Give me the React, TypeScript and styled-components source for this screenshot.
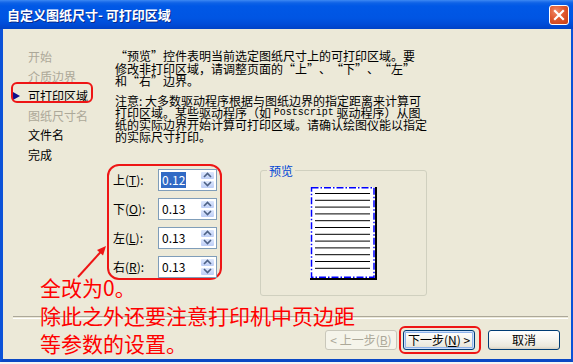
import React from "react";
import styled, { createGlobalStyle, css } from "styled-components";

const UI_FONT = `"Noto Sans CJK SC", "Liberation Sans", sans-serif`;

const GlobalStyle = createGlobalStyle`
  html, body { margin: 0; padding: 0; background: #ffffff; }
  body { width: 573px; height: 364px; overflow: hidden; font-family: ${UI_FONT}; }
`;

const Window = styled.div`
  position: relative;
  width: 573px;
  height: 364px;
  display: flex;
  flex-direction: column;
  font-family: ${UI_FONT};
  font-size: 12px;
  color: #000;
`;

const TitleBar = styled.div`
  flex: none;
  height: 29px;
  box-sizing: border-box;
  display: flex;
  align-items: center;
  justify-content: space-between;
  padding: 0 4px 0 7px;
  background: linear-gradient(
    to bottom,
    #3f8cf3 0px,
    #2a78ee 1px,
    #0d62e6 3px,
    #0058e6 6px,
    #0055e3 18px,
    #004cd8 24px,
    #0042c6 29px
  );
`;

const Title = styled.span`
  color: #fff;
  font-weight: 700;
  font-size: 13px;
  line-height: 16px;
  text-shadow: 1px 1px 0 #0a2a8a;
  white-space: nowrap;
`;

const CloseButton = styled.div`
  width: 20px;
  height: 20px;
  box-sizing: border-box;
  border: 1px solid #fff;
  border-radius: 3px;
  background: radial-gradient(circle at 35% 30%, #f08a6a 0%, #e0582f 45%, #c63d14 100%);
  display: flex;
  align-items: center;
  justify-content: center;
`;

const Frame = styled.div`
  flex: 1;
  display: flex;
  flex-direction: column;
  border-left: 3px solid #0b52d8;
  border-right: 2px solid #0b52d8;
  border-bottom: 3px solid #0a48c4;
`;

const Client = styled.div`
  flex: 1;
  display: flex;
  flex-direction: column;
  background: #ece9d8;
`;

const BottomStrip = styled.div`
  flex: none;
  height: 2px;
  background: #f4f4f4;
`;

const Top = styled.div`
  flex: 1;
  display: flex;
  min-height: 0;
`;

const Nav = styled.div`
  flex: none;
  width: 112px;
  box-sizing: border-box;
  padding: 18px 0 0 9px;
  display: flex;
  flex-direction: column;
  align-items: flex-start;
`;

const NavItem = styled.div<{ $disabled?: boolean; $marked?: boolean }>`
  position: relative;
  display: inline-flex;
  align-items: center;
  height: 19.6px;
  line-height: 19.6px;
  color: ${(p) => (p.$disabled ? "#aca899" : "#000")};
  white-space: nowrap;
  ${(p) =>
    p.$marked &&
    css`
      &::after {
        content: "";
        position: absolute;
        top: -4px;
        bottom: 3px;
        left: -1px;
        right: -5px;
        border: 2px solid #ee1515;
        border-radius: 6px;
      }
    `}
`;

const MarkerSlot = styled.span`
  width: 16px;
  flex: none;
  display: flex;
  align-items: center;
`;

const Marker = styled.span`
  width: 0;
  height: 0;
  margin-left: 1px;
  border-left: 7px solid #10108a;
  border-top: 4px solid transparent;
  border-bottom: 4px solid transparent;
`;

const Main = styled.div`
  flex: 1;
  padding-top: 21px;
  display: flex;
  flex-direction: column;
`;

const Para = styled.div`
  margin: 0;
  white-space: nowrap;
  & + & {
    margin-top: 7px;
  }
`;

const Line = styled.div<{ $lh: number }>`
  height: ${(p) => p.$lh}px;
  line-height: ${(p) => p.$lh}px;
  white-space: nowrap;
`;

/* full-width curly quote, like the bitmap CJK font draws it */
const Q = styled.span<{ $open?: boolean }>`
  display: inline-block;
  width: 12px;
  text-align: ${(p) => (p.$open ? "right" : "left")};
`;

const Mono = styled.span`
  font-family: "Liberation Mono", monospace;
  font-size: 10px;
  vertical-align: top;
  line-height: 12px;
`;

const Controls = styled.div`
  display: flex;
  align-items: flex-start;
  gap: 38px;
  margin-top: 21px;
`;

const SpinGroup = styled.div`
  margin-left: -8px;
  border: 2px solid #ee1515;
  border-radius: 12px;
  padding: 3px 3px 0 4px;
  display: flex;
  flex-direction: column;
  gap: 7px;
`;

const SpinRow = styled.div`
  display: flex;
  align-items: center;
  height: 22px;
`;

const SpinLabel = styled.label`
  width: 45px;
  white-space: nowrap;
  line-height: 22px;
`;

const SpinBox = styled.div`
  width: 59px;
  height: 22px;
  box-sizing: border-box;
  border: 1px solid #7f9db9;
  background: #fff;
  display: flex;
  align-items: stretch;
  padding: 1px;
`;

const SpinValue = styled.span<{ $selected?: boolean }>`
  align-self: center;
  margin-left: 1px;
  padding: 0 1px;
  height: 16px;
  line-height: 16px;
  font-size: 12px;
  ${(p) =>
    p.$selected &&
    css`
      background: #316ac5;
      color: #fff;
    `}
`;

const SpinButtons = styled.div`
  margin-left: auto;
  width: 15px;
  display: flex;
  flex-direction: column;
`;

const SpinBtn = styled.div`
  flex: 1;
  box-sizing: border-box;
  border: 1px solid #fff;
  border-radius: 2px;
  background: linear-gradient(to bottom, #dde7fc, #bccdf6);
  display: flex;
  align-items: center;
  justify-content: center;
`;

const Preview = styled.fieldset`
  margin: 0;
  width: 167px;
  height: 132px;
  box-sizing: border-box;
  border: 1px solid #d0d0bf;
  border-radius: 3px;
  padding: 9px 0 0 0;
  min-width: 0;
`;

const PreviewLegend = styled.legend`
  margin-left: 6px;
  padding: 0 2px;
  color: #0046d5;
  line-height: 14px;
  font-size: 12px;
`;

const Paper = styled.svg`
  display: block;
  margin: 0 auto;
`;

const Separator = styled.div`
  flex: none;
  height: 1px;
  margin: 0 3px 0 10px;
  border-top: 1px solid #aca899;
  border-bottom: 1px solid #ffffff;
`;

const ButtonRow = styled.div`
  flex: none;
  display: flex;
  justify-content: flex-end;
  align-items: center;
  padding: 7px 11px 5px 0;
`;

const Button = styled.button<{ $disabled?: boolean; $focused?: boolean }>`
  width: 72px;
  height: 20px;
  box-sizing: border-box;
  border: 1px solid #003c74;
  border-radius: 3px;
  padding: 0;
  margin: 0;
  font-family: ${UI_FONT};
  font-size: 12px;
  line-height: 18px;
  color: #000;
  background: linear-gradient(to bottom, #ffffff 0%, #f6f5ef 45%, #ebe8dc 85%, #d8d2c2 100%);
  white-space: nowrap;
  ${(p) =>
    p.$disabled &&
    css`
      border-color: #c9c7ba;
      background: #f5f4ea;
      color: #aca899;
    `}
  ${(p) =>
    p.$focused &&
    css`
      box-shadow: inset 0 0 0 1px #cee0fb, inset 0 0 0 2px #8fb3ea;
    `}
`;

const NextMark = styled.div`
  display: flex;
  border: 2px solid #ee1515;
  border-radius: 6px;
  padding: 2px 4px 2px 2px;
  margin: 0 7px 0 2px;
`;

const Annotation = styled.div`
  position: absolute;
  left: 40px;
  top: 273px;
  color: #ff0000;
  font-family: ${UI_FONT};
  font-size: 21px;
  line-height: 28px;
  white-space: nowrap;
  pointer-events: none;
`;

const ArrowSvg = styled.svg`
  position: absolute;
  left: 70px;
  top: 238px;
  pointer-events: none;
`;

const navItems: { label: string; disabled?: boolean; current?: boolean }[] = [
  { label: "开始", disabled: true },
  { label: "介质边界", disabled: true },
  { label: "可打印区域", current: true },
  { label: "图纸尺寸名", disabled: true },
  { label: "文件名" },
  { label: "完成" },
];

const spins = [
  { name: "上", key: "T", value: "0.12", selected: true },
  { name: "下", key: "O", value: "0.13" },
  { name: "左", key: "L", value: "0.13" },
  { name: "右", key: "R", value: "0.13" },
];

const Quoted = ({ children }: { children: React.ReactNode }) => (
  <>
    <Q $open>“</Q>
    {children}
    <Q>”</Q>
  </>
);

const Chevron = ({ up }: { up?: boolean }) => (
  <svg width="9" height="6" viewBox="0 0 9 6">
    <path
      d={up ? "M1 5 L4.5 1.5 L8 5" : "M1 1 L4.5 4.5 L8 1"}
      fill="none"
      stroke="#4d6185"
      strokeWidth="1.6"
    />
  </svg>
);

const PaperDrawing = () => {
  const lines = Array.from({ length: 12 }, (_, i) => 6.5 + i * 6.8);
  return (
    <Paper width="67" height="93" viewBox="0 0 67 93">
      <rect x="0" y="0" width="65" height="91" fill="#ffffff" />
      <rect x="65" y="0" width="2" height="93" fill="#000" />
      <rect x="0" y="91" width="67" height="2" fill="#000" />
      <rect
        x="1.5"
        y="0.75"
        width="62.5"
        height="89.5"
        fill="none"
        stroke="#0000ff"
        strokeWidth="1.5"
        strokeDasharray="7 2 1.5 2"
      />
      {lines.map((y) => (
        <line key={y} x1="5" x2="60" y1={y} y2={y} stroke="#000" strokeWidth="1" />
      ))}
    </Paper>
  );
};

export default function App() {
  return (
    <>
      <GlobalStyle />
      <Window>
        <TitleBar>
          <Title>自定义图纸尺寸- 可打印区域</Title>
          <CloseButton>
            <svg width="12" height="12" viewBox="0 0 12 12">
              <path d="M2 2 L10 10 M10 2 L2 10" stroke="#fff" strokeWidth="2.2" strokeLinecap="square" />
            </svg>
          </CloseButton>
        </TitleBar>
        <Frame>
          <Client>
            <Top>
              <Nav>
                {navItems.map((n) => (
                  <NavItem key={n.label} $disabled={n.disabled} $marked={n.current}>
                    <MarkerSlot>{n.current && <Marker />}</MarkerSlot>
                    {n.label}
                  </NavItem>
                ))}
              </Nav>
              <Main>
                <Para>
                  <Line $lh={12.5}>
                    <Quoted>预览</Quoted>控件表明当前选定图纸尺寸上的可打印区域。要
                  </Line>
                  <Line $lh={12.5}>
                    修改非打印区域，请调整页面的<Quoted>上</Quoted>、<Quoted>下</Quoted>、<Quoted>左</Quoted>
                  </Line>
                  <Line $lh={12.5}>
                    和<Quoted>右</Quoted>边界。
                  </Line>
                </Para>
                <Para>
                  <Line $lh={12}>注意: 大多数驱动程序根据与图纸边界的指定距离来计算可</Line>
                  <Line $lh={12}>
                    打印区域。某些驱动程序（如 <Mono>Postscript</Mono> 驱动程序）从图
                  </Line>
                  <Line $lh={12}>纸的实际边界开始计算可打印区域。请确认绘图仪能以指定</Line>
                  <Line $lh={12}>的实际尺寸打印。</Line>
                </Para>
                <Controls>
                  <SpinGroup>
                    {spins.map((s) => (
                      <SpinRow key={s.key}>
                        <SpinLabel>
                          {s.name}(<u>{s.key}</u>):
                        </SpinLabel>
                        <SpinBox>
                          <SpinValue $selected={s.selected}>{s.value}</SpinValue>
                          <SpinButtons>
                            <SpinBtn>
                              <Chevron up />
                            </SpinBtn>
                            <SpinBtn>
                              <Chevron />
                            </SpinBtn>
                          </SpinButtons>
                        </SpinBox>
                      </SpinRow>
                    ))}
                  </SpinGroup>
                  <Preview>
                    <PreviewLegend>预览</PreviewLegend>
                    <PaperDrawing />
                  </Preview>
                </Controls>
              </Main>
            </Top>
            <Separator />
            <ButtonRow>
              <Button $disabled>
                &lt; 上一步(<u>B</u>)
              </Button>
              <NextMark>
                <Button $focused>
                  下一步(<u>N</u>) &gt;
                </Button>
              </NextMark>
              <Button>取消</Button>
            </ButtonRow>
          </Client>
        </Frame>
        <BottomStrip />
        <Annotation>
          全改为0。
          <br />
          除此之外还要注意打印机中页边距
          <br />
          等参数的设置。
        </Annotation>
        <ArrowSvg width="45" height="45" viewBox="0 0 45 45">
          <line x1="8" y1="39" x2="32" y2="12.5" stroke="#ee1515" strokeWidth="2" />
          <polygon points="36,8 33,17.4 27,12" fill="#ee1515" />
        </ArrowSvg>
      </Window>
    </>
  );
}
